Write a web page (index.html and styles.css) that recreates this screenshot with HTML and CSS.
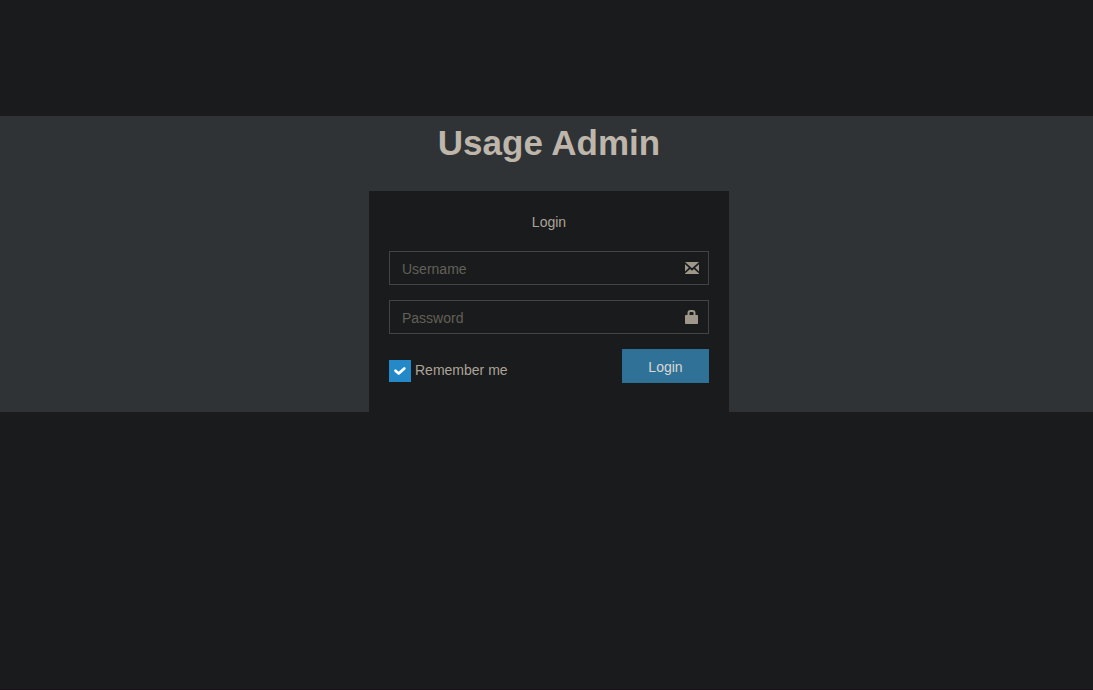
FILE: index.html
```
<!DOCTYPE html>
<html lang="en">
<head>
<meta charset="utf-8">
<title>Usage Admin</title>
<link rel="stylesheet" href="styles.css">
</head>
<body>
<main class="login-page">
  <div class="login-box">
    <h1 class="login-logo">Usage Admin</h1>
    <form class="login-body">
      <p class="login-msg">Login</p>
      <label class="field">
        <input class="field-input" type="text" placeholder="Username">
        <svg class="field-icon" viewBox="0 0 14 12" width="14" height="12"><path d="M0 0h14L7 6.200zM0 2.200 3.900 5.700 0 9.400zM14 2.200v7.200L10.100 5.700zM5.100 7 7 8.700 8.900 7 14 11.600v.4H0v-.4z"/></svg>
      </label>
      <label class="field">
        <input class="field-input" type="password" placeholder="Password">
        <svg class="field-icon" viewBox="0 0 14 14" width="14" height="14"><path fill-rule="evenodd" d="M2.500 5V3Q2.500 0 5.500 0h2Q10.500 0 10.500 3v2h1.800q.7 0 .7.700v7.600q0 .7-.7.700H.7q-.7 0-.7-.7V5.700Q0 5 .7 5zM4.500 5h4V3Q8.500 2 7.500 2h-2Q4.500 2 4.500 3z"/></svg>
      </label>
      <div class="actions">
        <label class="remember">
          <span class="check"><svg viewBox="0 0 22 22" width="22" height="22"><path d="M6.500 10.700 9.700 13.600 15.300 8.400"/></svg></span>
          <span class="remember-text">Remember me</span>
        </label>
        <button class="submit" type="button">Login</button>
      </div>
    </form>
  </div>
</main>
</body>
</html>
```
FILE: styles.css
```
* { box-sizing: border-box; }
body {
  margin: 0;
  height: 690px;
  padding-top: 116px;
  overflow: hidden;
  background: #1a1b1c;
  color: #aba499;
  font: 14px/20px "Nimbus Sans", "Liberation Sans", Arial, sans-serif;
  border-bottom: 1px solid #1a0f17;
}
.login-page {
  height: 296px;
  padding-left: 5px;
  background: #2f3335;
}
.login-box { width: 360px; margin: 0 auto; }
.login-logo {
  margin: 0;
  height: 75px;
  padding-top: 1px;
  font-size: 35px;
  line-height: 52px;
  text-align: center;
  white-space: nowrap;
  color: #beb5ab;
}
.login-body {
  height: 221px;
  padding: 20px;
  background: #1a1b1c;
}
.login-msg { margin: 0; height: 40px; padding-top: 1px; text-align: center; }
.field {
  display: flex;
  align-items: center;
  justify-content: space-between;
  height: 34px;
  margin-bottom: 15px;
  padding: 0 9px 0 12px;
  border: 1px solid #3f4446;
}
.field-input {
  width: 240px;
  height: 20px;
  margin-top: 2px;
  padding: 0;
  border: 0;
  outline: 0;
  background: transparent;
  color: inherit;
  font: inherit;
}
.field-input::placeholder { color: #626058; opacity: 1; }
.field-icon { fill: #9f978a; }
.actions { display: flex; justify-content: space-between; }
.remember { display: flex; gap: 4px; padding-top: 11px; }
.check { width: 22px; height: 22px; background: #2489c9; }
.check svg {
  display: block;
  fill: none;
  stroke: #fff;
  stroke-width: 2.7;
  stroke-linecap: round;
  stroke-linejoin: round;
}
.submit {
  width: 87px;
  height: 34px;
  padding: 2px 0 0;
  border: 1px solid #2b6f97;
  background: #307297;
  color: #dad8d4;
  font: inherit;
}
```
